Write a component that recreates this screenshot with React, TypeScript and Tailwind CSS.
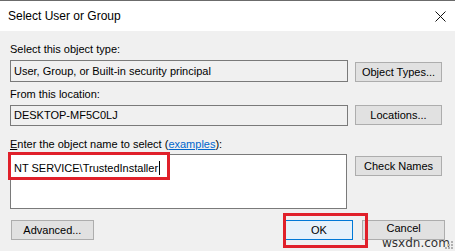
import React from "react";

const font = { fontFamily: '"Liberation Sans", Arial, sans-serif' };

function Btn({ children, className = "" }: { children: React.ReactNode; className?: string }) {
  return (
    <div
      className={`flex h-[20px] w-[87px] items-center justify-center border border-[#adadad] bg-[#e1e1e1] text-[11px] text-black ${className}`}
    >
      {children}
    </div>
  );
}

export default function App() {
  return (
    <div className="relative h-[251px] w-[455px] overflow-hidden bg-[#f0f0f0] text-black" style={font}>
      <div className="h-[1px] bg-[#6b6b6b]" />
      <div className="flex h-[30px] items-center justify-between bg-white pl-[8px] pr-[9px]">
        <span className="text-[12px] leading-none">Select User or Group</span>
        <svg width="11" height="11" viewBox="0 0 11 11" className="mt-[1px]">
          <path d="M0.5 0.5 L10.5 10.5 M10.5 0.5 L0.5 10.5" stroke="#111" strokeWidth="1" />
        </svg>
      </div>

      <div className="px-[10px]">
        <div className="mt-[11px] h-[15px] text-[11px] leading-[15px]">Select this object type:</div>
        <div className="mt-[3px] flex items-start gap-[7px]">
          <div className="flex h-[22px] w-[338px] items-center border border-[#7a7a7a] bg-[#f0f0f0] pl-[3px] text-[11px]">
            User, Group, or Built-in security principal
          </div>
          <Btn className="mt-[2px]">Object Types...</Btn>
        </div>

        <div className="mt-[5px] h-[15px] text-[11px] leading-[15px]">From this location:</div>
        <div className="mt-[3px] flex items-start gap-[7px]">
          <div className="flex h-[21px] w-[338px] items-center border border-[#7a7a7a] bg-[#f0f0f0] pl-[3px] text-[11px]">
            DESKTOP-MF5C0LJ
          </div>
          <Btn>Locations...</Btn>
        </div>

        <div className="mt-[11px] h-[15px] text-[11px] leading-[15px]">
          <span className="underline">E</span>nter the object name to select (
          <span className="text-[#0066cc] underline">examples</span>):
        </div>
        <div className="mt-[2px] flex items-start gap-[8px]">
          <div className="h-[55px] w-[337px] border border-[#7a7a7a] bg-white pl-[3px] pt-[3px] text-[11px] leading-[14px]">
            <span>NT SERVICE\TrustedInstaller</span>
            <span className="ml-[1px] inline-block h-[14px] w-[1px] translate-y-[3px] bg-black" />
          </div>
          <Btn className="mt-[2px]">Check Names</Btn>
        </div>

        <div className="mt-[11px] flex items-start">
          <Btn className="ml-[1px]">Advanced...</Btn>
          <div className="ml-[191px] flex h-[20px] w-[72px] items-center justify-center border border-[#0078d7] bg-[#e5f1fb] text-[11px]">
            OK
          </div>
          <Btn className="ml-[9px] w-[72px] items-start pt-[1px] leading-[13px]">Cancel</Btn>
        </div>
      </div>

      {/* annotation boxes */}
      <div className="absolute left-[8px] top-[152px] h-[28px] w-[162px] border-[3px] border-[#e0202a]" />
      <div className="absolute left-[283px] top-[213px] h-[35px] w-[85px] border-[3px] border-[#e0202a]" />

      {/* watermark */}
      <div
        className="absolute left-[382px] top-[237px] text-[12px] leading-[12px] text-[#333]"
        style={{ fontFamily: '"DejaVu Sans", sans-serif' }}
      >
        wsxdn.com
      </div>
      <svg className="absolute left-[444px] top-[240px]" width="10" height="10" viewBox="0 0 10 10">
        <rect x="7" y="1" width="2" height="2" fill="#b0b0b0" />
        <rect x="4" y="4" width="2" height="2" fill="#b0b0b0" />
        <rect x="7" y="4" width="2" height="2" fill="#b0b0b0" />
        <rect x="1" y="7" width="2" height="2" fill="#b0b0b0" />
        <rect x="4" y="7" width="2" height="2" fill="#b0b0b0" />
        <rect x="7" y="7" width="2" height="2" fill="#b0b0b0" />
      </svg>
    </div>
  );
}
